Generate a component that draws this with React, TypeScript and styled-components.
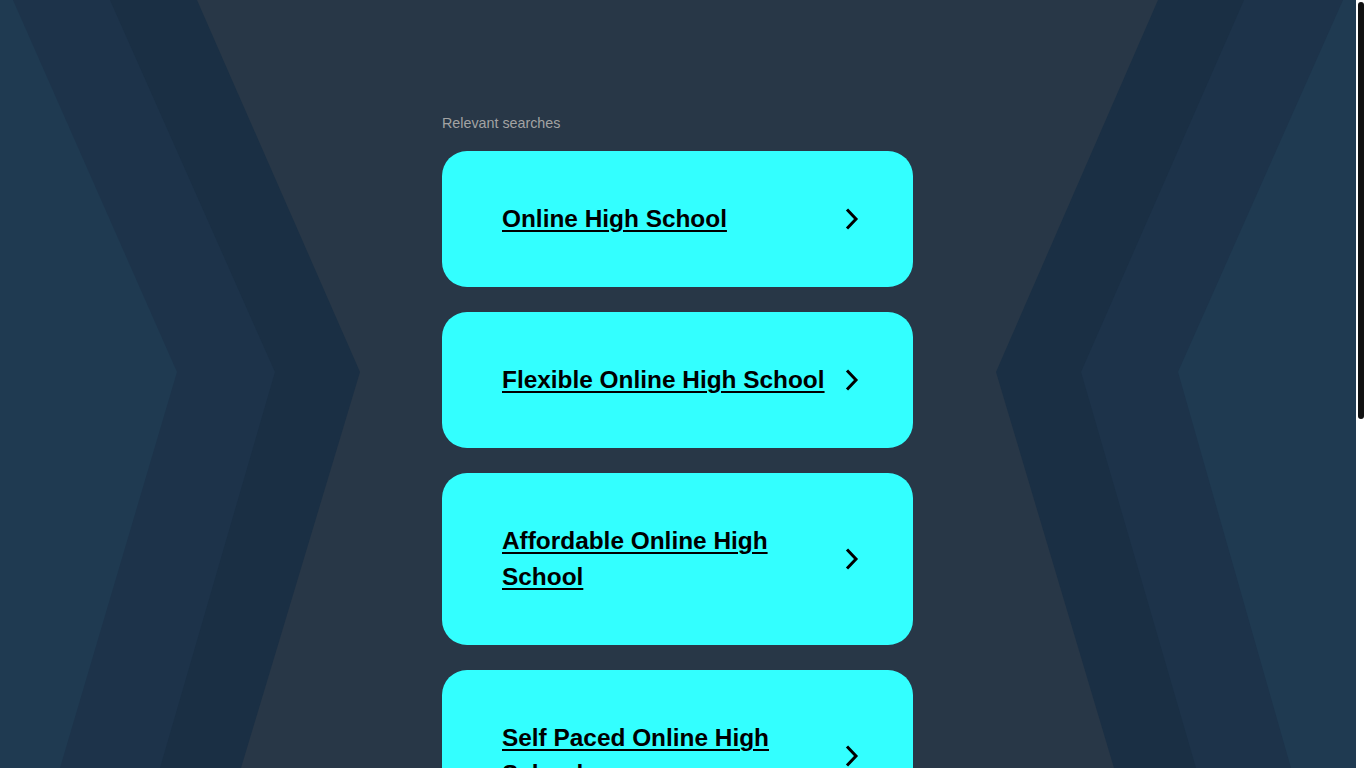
import React from 'react'
import styled, { createGlobalStyle } from 'styled-components'

const searches = [
    'Online High School',
    'Flexible Online High School',
    'Affordable Online High School',
    'Self Paced Online High School',
    'Accredited Online High School',
    'Online High School Diploma',
]

const GlobalStyle = createGlobalStyle`
    html, body {
        margin: 0;
        padding: 0;
        height: 100%;
        overflow: hidden;
        background: #283747;
        font-family: "Liberation Sans", Arial, sans-serif;
    }
`

const Backdrop = () => (
    <BackdropSvg viewBox="0 0 1356 768" preserveAspectRatio="none">
        <polygon points="0,0 197,0 360,372 241,768 0,768" fill="#1a2f44" />
        <polygon points="0,0 110,0 275,372 160,768 0,768" fill="#1d334a" />
        <polygon points="0,0 13,0 177,372 60,768 0,768" fill="#1f3a51" />
        <polygon points="1356,0 1158,0 996,372 1114,768 1356,768" fill="#1a2f44" />
        <polygon points="1356,0 1244,0 1081,372 1196,768 1356,768" fill="#1d334a" />
        <polygon points="1356,0 1343,0 1178,372 1291,768 1356,768" fill="#1f3a51" />
    </BackdropSvg>
)

const Chevron = () => (
    <ChevronSvg viewBox="0 0 24 24">
        <polyline
            points="8,2.5 17,12 8,21.5"
            fill="none"
            stroke="#000"
            strokeWidth="3"
        />
    </ChevronSvg>
)

const App = () => {
    return (
        <Viewport>
            <GlobalStyle />
            <Stage>
                <Backdrop />
                <Page>
                    <Results>
                        <Heading>Relevant searches</Heading>
                        <CardList>
                            {searches.map((s) => (
                                <Card key={s} href="#">
                                    <CardTitle>{s}</CardTitle>
                                    <Chevron />
                                </Card>
                            ))}
                        </CardList>
                    </Results>
                    <Footer>
                        <FooterLink href="#">Privacy Policy</FooterLink>
                    </Footer>
                </Page>
            </Stage>
            <ScrollTrack>
                <ScrollThumb />
            </ScrollTrack>
        </Viewport>
    )
}

export default App

const Viewport = styled.div`
    display: flex;
    height: 100vh;
    overflow: hidden;
`

const Stage = styled.div`
    position: relative;
    flex: 1;
    height: 100vh;
    overflow: hidden;
`

const BackdropSvg = styled.svg`
    position: absolute;
    top: 0;
    left: 0;
    width: 100%;
    height: 100vh;
    z-index: 0;
    display: block;
`

const ScrollTrack = styled.div`
    width: 10px;
    height: 100vh;
    background: #ffffff;
    padding: 2px 2px 0;
    box-sizing: border-box;
`

const ScrollThumb = styled.div`
    width: 6px;
    height: 417px;
    background: #111111;
    border-radius: 3px;
`

const Page = styled.main`
    position: relative;
    z-index: 1;
    display: flex;
    flex-direction: column;
    align-items: center;
    padding: 115px 1px 80px 0;
`

const Results = styled.section`
    width: 471px;
`

const Heading = styled.p`
    margin: 0 0 19px;
    font-size: 14.3px;
    line-height: 17px;
    color: #a3a3a3;
`

const CardList = styled.div`
    display: flex;
    flex-direction: column;
    gap: 25px;
`

const Card = styled.a`
    display: flex;
    align-items: center;
    justify-content: space-between;
    gap: 10px;
    padding: 50px 50px 50px 60px;
    background: #33ffff;
    border-radius: 25px;
    color: #000;
    text-decoration: none;
`

const CardTitle = styled.span`
    flex: 1;
    max-width: 330px;
    font-size: 24.4px;
    font-weight: 700;
    line-height: 36px;
    text-decoration: underline;
    text-decoration-thickness: 2px;
    text-underline-offset: 3px;
`

const ChevronSvg = styled.svg`
    width: 24px;
    height: 24px;
    flex-shrink: 0;
`

const Footer = styled.footer`
    margin-top: 60px;
`

const FooterLink = styled.a`
    font-size: 14px;
    color: #a3a3a3;
`
